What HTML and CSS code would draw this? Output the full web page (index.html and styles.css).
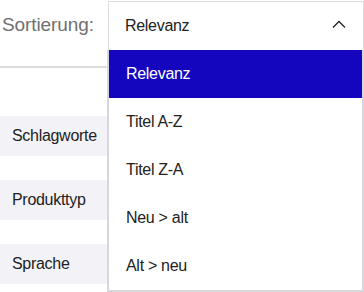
FILE: index.html
```html
<!DOCTYPE html>
<html lang="de">
<head>
  <meta charset="UTF-8" />
  <meta name="viewport" content="width=device-width, initial-scale=1.0"/>
  <title>Sortierung</title>
  <link rel="stylesheet" href="styles.css">
</head>
<body>
  <div class="sort-row">
    <span class="sort-label">Sortierung:</span>
    <div class="select">
      <div class="select-head">
        <span>Relevanz</span>
        <svg class="chevron" width="14" height="8" viewBox="0 0 14 8">
          <polyline points="1,7.5 7,1.5 13,7.5" fill="none" stroke="#222" stroke-width="1.3"/>
        </svg>
      </div>
      <!-- open option list -->
      <ul class="options">
        <li class="option active">Relevanz</li>
        <li class="option">Titel A-Z</li>
        <li class="option">Titel Z-A</li>
        <li class="option">Neu &gt; alt</li>
        <li class="option">Alt &gt; neu</li>
      </ul>
    </div>
  </div>

  <div class="divider"></div>

  <div class="filters">
    <div class="filter">Schlagworte</div>
    <div class="filter">Produkttyp</div>
    <div class="filter">Sprache</div>
  </div>
</body>
</html>
```

FILE: styles.css
```css
* {
  box-sizing: border-box;
}

body {
  margin: 0;
  font-family: "Liberation Sans", Arial, sans-serif;
  color: #222;
  background: #fff;
  width: 364px;
  height: 292px;
  overflow: hidden;
  letter-spacing: -0.3px;
}

.sort-row {
  display: flex;
  align-items: stretch;
  padding-top: 1px;
  height: 50px;
}

.sort-label {
  width: 108px;
  padding-left: 2px;
  font-size: 19px;
  letter-spacing: -0.1px;
  color: #707070;
  display: flex;
  align-items: center;
  padding-bottom: 2px;
}

.select {
  position: relative;
  flex: 1;
  border: 1px solid #dcdcdc;
  border-bottom: none;
}

.select-head {
  height: 49px;
  display: flex;
  align-items: center;
  justify-content: space-between;
  padding: 0 17px 0 16px;
  font-size: 16px;
  padding-bottom: 2px;
}

.chevron {
  display: block;
  margin-top: -3px;
}

.options {
  position: absolute;
  top: 48px;
  left: -2px;
  right: -1px;
  margin: 0;
  padding: 0;
  list-style: none;
  background: #fff;
  border: 2px solid #d6d6dc;
  border-top: none;
}

.option {
  height: 48px;
  display: flex;
  align-items: center;
  padding-left: 17px;
  font-size: 16px;
}

.option.active {
  background: #1406bf;
  color: #fff;
}

.divider {
  width: 107px;
  height: 2px;
  background: #dcdcdc;
  margin-top: 16px;
}

.filters {
  width: 107px;
  margin-top: 48px;
  display: flex;
  flex-direction: column;
  gap: 24px;
}

.filter {
  height: 40px;
  background: #f3f3f7;
  padding-left: 12px;
  display: flex;
  align-items: center;
  font-size: 16px;
}
```
